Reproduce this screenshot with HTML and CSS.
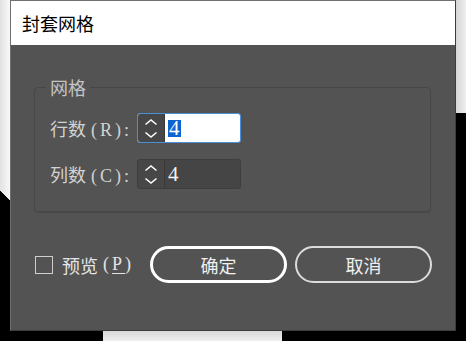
FILE: index.html
```html
<!DOCTYPE html>
<html lang="zh-CN">
<head>
    <meta charset="UTF-8">
    <title>封套网格</title>
    <link rel="stylesheet" href="styles.css">
</head>
<body>
<div class="screen">
    <div class="edge-left"></div>
    <div class="window">
        <div class="titlebar">封套网格</div>
        <div class="content">
            <fieldset class="group">
                <legend>网格</legend>
                <div class="field">
                    <label class="field-label">行数<span class="latin">(R):</span></label>
                    <div class="spin focused">
                        <div class="stepper">
                            <svg width="26" height="28" viewBox="0 0 26 28"><path d="M7.5 10.5 L13 6 L18.5 10.5 M7.5 18.5 L13 23 L18.5 18.5" fill="none" stroke="#fff" stroke-width="1.6"/></svg>
                        </div>
                        <div class="value"><span class="sel">4</span></div>
                    </div>
                </div>
                <div class="field">
                    <label class="field-label">列数<span class="latin">(C):</span></label>
                    <div class="spin">
                        <div class="stepper">
                            <svg width="26" height="28" viewBox="0 0 26 28"><path d="M7.5 10.5 L13 6 L18.5 10.5 M7.5 18.5 L13 23 L18.5 18.5" fill="none" stroke="#fff" stroke-width="1.6"/></svg>
                        </div>
                        <div class="value">4</div>
                    </div>
                </div>
            </fieldset>
            <div class="actions">
                <label class="check"><span class="box"></span>预览<span class="latin">(<u>P</u>)</span></label>
                <button class="btn primary">确定</button>
                <button class="btn">取消</button>
            </div>
        </div>
    </div>
    <div class="edge-right"></div>
    <div class="floor"><div class="floor-item"></div></div>
</div>
</body>
</html>
```

FILE: styles.css
```css
* {
    margin: 0;
    padding: 0;
    box-sizing: border-box;
}
body {
    background-color: #000;
    overflow: hidden;
    font-family: "Noto Sans CJK SC", sans-serif;
}
.screen {
    display: grid;
    grid-template-columns: 10px 446px 10px;
    grid-template-rows: 331px 10px;
    width: 466px;
    height: 341px;
}
.edge-left {
    background:
        linear-gradient(to top right, #000 50%, transparent 50%) 0 190px / 10px 10px no-repeat,
        linear-gradient(to right, #e2e2e2, #f9f9f9) 0 0 / 10px 200px no-repeat,
        #000;
}
.edge-right {
    background:
        linear-gradient(to right, #d6d6d6, #eeeeee) 0 0 / 10px 113px no-repeat,
        #000;
}
.floor {
    grid-column: 1 / 4;
    padding-left: 103px;
}
.floor-item {
    width: 179px;
    height: 100%;
    background: linear-gradient(to bottom, #d9d9d9, #efefef);
}
.window {
    display: flex;
    flex-direction: column;
    border: 1px solid #707070;
    border-right-color: #3c3c3c;
    border-bottom-color: #3c3c3c;
    background-color: #535353;
}
.titlebar {
    height: 44px;
    flex: none;
    background-color: #fff;
    color: #000;
    font-size: 18px;
    line-height: 44px;
    padding-left: 11px;
}
.content {
    flex: 1;
    padding: 32px 24px 0 23px;
}
.group {
    border: 1px solid #474747;
    border-radius: 4px;
    box-shadow: 0 1px 1px rgba(0, 0, 0, .12);
    padding: 16px 0 22px 11px;
}
.group legend {
    padding: 0 4px;
    font-size: 18px;
    line-height: 20px;
    color: #c4c4c4;
}
.latin {
    font-family: "Liberation Serif", serif;
    letter-spacing: 3px;
    margin-left: 5px;
}
.field {
    display: flex;
    align-items: center;
    padding-left: 4px;
}
.field + .field {
    margin-top: 16px;
}
.field-label {
    width: 87px;
    font-size: 18px;
    color: #d2d2d2;
    white-space: nowrap;
}
.spin {
    display: flex;
    width: 104px;
    height: 30px;
    border: 1px solid #3e3e3e;
    border-radius: 3px;
    overflow: hidden;
    background-color: #454545;
}
.spin.focused {
    border-color: #4b8fda;
    background-color: #fff;
}
.stepper {
    width: 27px;
    flex: none;
    display: flex;
    align-items: center;
    justify-content: center;
    background-color: #474747;
    border-right: 1px solid #3a3a3a;
}
.value {
    flex: 1;
    padding-left: 3px;
    font-family: "Liberation Serif", serif;
    font-size: 21px;
    line-height: 28px;
    color: #f2f2f2;
}
.sel {
    display: inline-block;
    background-color: #0b63d2;
    color: #fff;
    line-height: 17px;
    padding: 0 1px;
}
.actions {
    display: flex;
    align-items: center;
    margin-top: 34px;
    padding-left: 1px;
}
.check {
    display: flex;
    align-items: center;
    font-size: 18px;
    color: #e4e4e4;
    width: 115px;
    flex: none;
}
.check .box {
    width: 18px;
    height: 18px;
    border: 1px solid #cfcfcf;
    margin-right: 9px;
}
.check u {
    text-underline-offset: 3px;
}
.btn {
    width: 137px;
    height: 37px;
    flex: none;
    border: 2px solid #dcdcdc;
    border-radius: 19px;
    background: transparent;
    color: #f0f0f0;
    font-family: "Noto Sans CJK SC", sans-serif;
    font-size: 18px;
}
.btn.primary {
    border: 3px solid #fff;
}
.btn + .btn {
    margin-left: 8px;
}
```
